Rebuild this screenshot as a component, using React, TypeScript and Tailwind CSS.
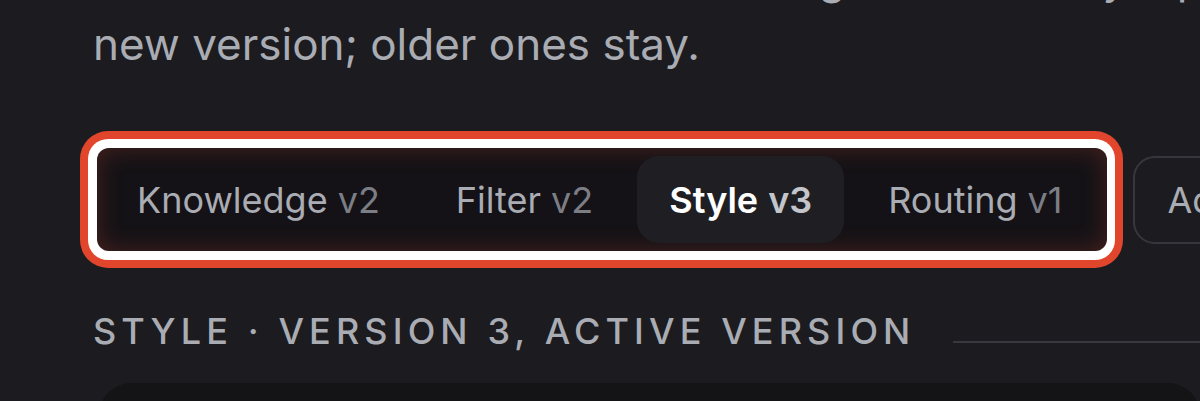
const tabs = [
  { name: 'Knowledge', version: 'v2', active: false },
  { name: 'Filter', version: 'v2', active: false },
  { name: 'Style', version: 'v3', active: true },
  { name: 'Routing', version: 'v1', active: false },
];

export default function App() {
  return (
    <main
      className="h-[401px] w-[1200px] overflow-hidden bg-[#1c1c20] pl-[93px] text-[#aaacb4]"
      style={{ fontFamily: 'Inter, "Noto Sans", sans-serif' }}
    >
      {/* Intro copy, first line scrolled out of view */}
      <p className="mt-[-55px] w-[1200px] text-[44px] leading-[66px] whitespace-nowrap">
        Once the new rules are all saved it generates only a pinned
        <br />
        new version; older ones stay.
      </p>

      {/* Tab bar */}
      <div className="mt-[54px] ml-[-13px] flex items-center gap-[10px]">
        <div className="shrink-0 rounded-[28px] bg-[#e1462c] p-[8px]">
          <div className="rounded-[20px] bg-white p-[9px] pr-[8px]">
            <div className="flex gap-[12px] rounded-[12px] bg-[#141216] p-[8px] pr-[13px] shadow-[inset_0_0_24px_rgba(200,70,50,0.3)]">
              {tabs.map((tab) => (
                <div
                  key={tab.name}
                  className={
                    tab.active
                      ? 'flex h-[87px] items-center rounded-[22px] bg-[#1f1f23] px-[32px] text-[36px] font-semibold'
                      : 'flex h-[87px] items-center rounded-[22px] px-[32px] text-[36px]'
                  }
                >
                  <span className={tab.active ? 'text-white' : 'text-[#aaacb4]'}>{tab.name}</span>
                  <span className={tab.active ? 'ml-[10px] text-[#c3c5cb]' : 'ml-[10px] text-[#7c7e86]'}>
                    {tab.version}
                  </span>
                </div>
              ))}
            </div>
          </div>
        </div>
        <button className="flex h-[88px] shrink-0 items-center rounded-[22px] border-2 border-[#36363c] px-[32px] text-[36px] text-[#aaacb4]">
          Add policy
        </button>
      </div>

      {/* Section heading */}
      <div className="mt-[41px] flex items-center gap-[38px]">
        <h2 className="shrink-0 text-[36px] leading-[44px] font-medium tracking-[0.142em] uppercase">
          Style · Version 3, active version
        </h2>
        <div className="mt-[22px] h-[2px] flex-1 bg-[#38383e]" />
      </div>

      {/* Version card (cut off) */}
      <div className="mt-[30px] ml-[6px] h-[120px] rounded-[32px] bg-[#141417]" />
    </main>
  );
}
